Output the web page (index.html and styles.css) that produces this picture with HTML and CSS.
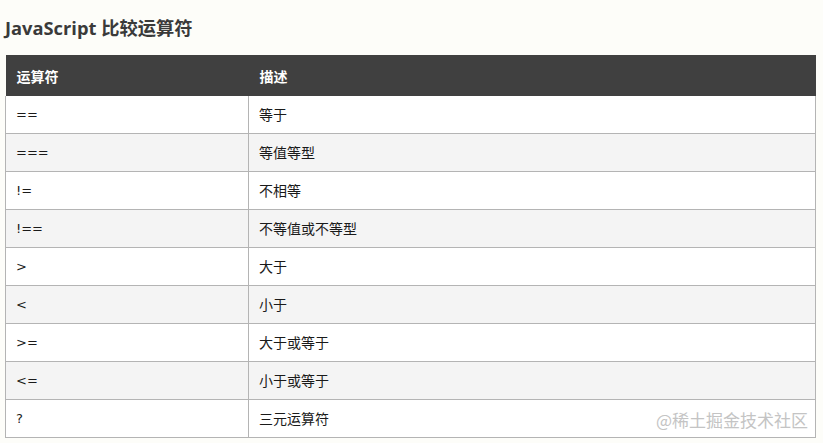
FILE: index.html
```html
<!DOCTYPE html>
<html lang="zh-CN">
<head>
<meta charset="utf-8">
<title>JavaScript 比较运算符</title>
<link rel="stylesheet" href="styles.css">
</head>
<body>
<div class="page">
  <h2 class="title">JavaScript 比较运算符</h2>
  <table class="ops">
    <colgroup><col class="c1"><col class="c2"></colgroup>
    <thead>
      <tr><th>运算符</th><th>描述</th></tr>
    </thead>
    <tbody>
      <tr><td class="op">==</td><td>等于</td></tr>
      <tr><td class="op">===</td><td>等值等型</td></tr>
      <tr><td class="op">!=</td><td>不相等</td></tr>
      <tr><td class="op">!==</td><td>不等值或不等型</td></tr>
      <tr><td class="op">&gt;</td><td>大于</td></tr>
      <tr><td class="op">&lt;</td><td>小于</td></tr>
      <tr><td class="op">&gt;=</td><td>大于或等于</td></tr>
      <tr><td class="op">&lt;=</td><td>小于或等于</td></tr>
      <tr><td class="op">?</td><td class="last">三元运算符<span class="wm">@稀土掘金技术社区</span></td></tr>
    </tbody>
  </table>
</div>
</body>
</html>
```
FILE: styles.css
```css
html, body {
  margin: 0;
  padding: 0;
  background: #fdfdf9;
}
.page {
  padding: 16px 0 0 5px;
  font-family: "Open Sans", "Noto Sans CJK SC", sans-serif;
}
.title {
  margin: 0 0 15px 0;
  font-size: 18.3px;
  line-height: 24px;
  font-weight: 700;
  color: #3a3a3a;
}
.ops {
  border-collapse: collapse;
  width: 811px;
  table-layout: fixed;
  font-size: 14px;
  color: #1a1a1a;
  font-family: "Noto Sans CJK SC", sans-serif;
}
.c1 { width: 243px; }
.ops th {
  background: #404040;
  color: #fff;
  text-align: left;
  font-weight: 700;
  height: 41px;
  padding: 0 10px 0 11px;
  box-sizing: border-box;
  border: none;
}
.ops td {
  border: 1px solid #b4b4b4;
  height: 38px;
  padding: 0 10px;
  box-sizing: border-box;
  background: #ffffff;
}
.ops tbody tr:first-child td {
  border-top: none;
  height: 37px;
}
.ops td.op {
  padding-left: 10px;
  font-family: "DejaVu Sans", sans-serif;
  font-size: 13px;
  letter-spacing: 0;
}
.ops tbody tr:nth-child(even) td {
  background: #f4f4f4;
}
.last {
  position: relative;
}
.wm {
  position: absolute;
  right: 7px;
  top: 7px;
  font-size: 17px;
  color: #c4c4c4;
  letter-spacing: 0;
}
```
